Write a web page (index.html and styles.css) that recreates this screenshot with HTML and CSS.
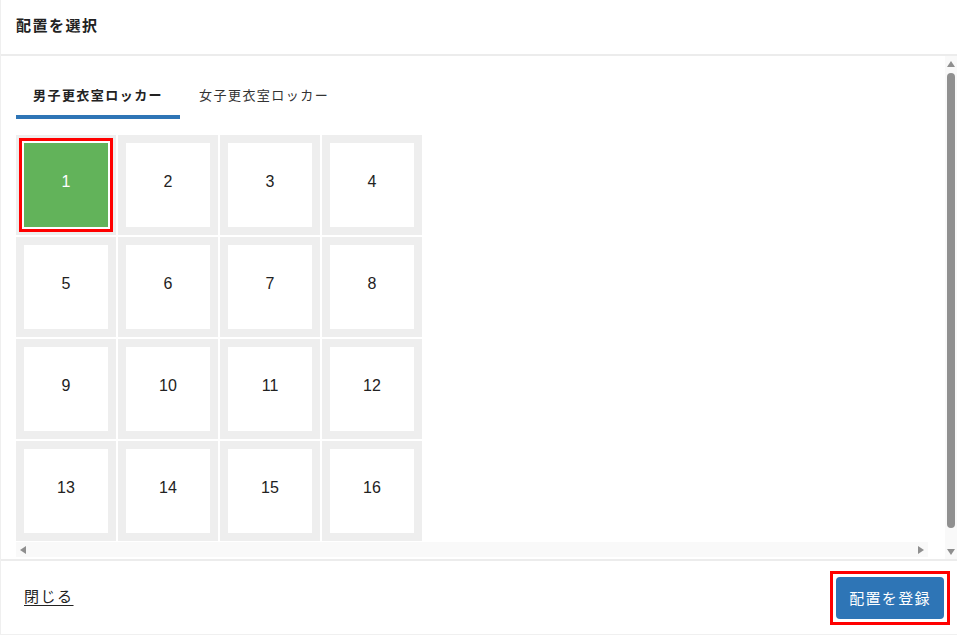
FILE: index.html
```html
<!DOCTYPE html>
<html lang="ja">
<head>
<meta charset="utf-8">
<title>配置を選択</title>
<link rel="stylesheet" href="styles.css">
</head>
<body>
<div class="modal">
  <div class="modal-header">
    <h1 class="modal-title">配置を選択</h1>
  </div>
  <div class="modal-body">
    <div class="body-content">
      <div class="tabs">
        <div class="tab active">男子更衣室ロッカー</div>
        <div class="tab">女子更衣室ロッカー</div>
      </div>
      <div class="locker-grid">
        <div class="cell"><div class="slot selected">1</div></div>
        <div class="cell"><div class="slot">2</div></div>
        <div class="cell"><div class="slot">3</div></div>
        <div class="cell"><div class="slot">4</div></div>
        <div class="cell"><div class="slot">5</div></div>
        <div class="cell"><div class="slot">6</div></div>
        <div class="cell"><div class="slot">7</div></div>
        <div class="cell"><div class="slot">8</div></div>
        <div class="cell"><div class="slot">9</div></div>
        <div class="cell"><div class="slot">10</div></div>
        <div class="cell"><div class="slot">11</div></div>
        <div class="cell"><div class="slot">12</div></div>
        <div class="cell"><div class="slot">13</div></div>
        <div class="cell"><div class="slot">14</div></div>
        <div class="cell"><div class="slot">15</div></div>
        <div class="cell"><div class="slot">16</div></div>
      </div>
      <div class="hscroll">
        <span class="arrow arrow-left"></span>
        <span class="arrow arrow-right"></span>
      </div>
    </div>
    <div class="vscroll">
      <span class="arrow arrow-up"></span>
      <div class="vthumb"></div>
      <span class="arrow arrow-down"></span>
    </div>
  </div>
  <div class="modal-footer">
    <a class="close-link" href="#">閉じる</a>
    <span class="btn-focus"><button class="primary-btn" type="button">配置を登録</button></span>
  </div>
</div>
</body>
</html>
```

FILE: styles.css
```css
* { box-sizing: border-box; }

html, body {
  margin: 0;
  padding: 0;
  background: #ffffff;
}

body {
  font-family: "Liberation Sans", "Noto Sans CJK JP", sans-serif;
  color: #222222;
  width: 957px;
  height: 635px;
  overflow: hidden;
}

.modal {
  height: 635px;
  border-left: 1px solid #efefef;
  border-bottom: 1px solid #f0f0f0;
  display: flex;
  flex-direction: column;
}

.modal-header {
  height: 56px;
  flex: none;
  display: flex;
  align-items: center;
  padding: 0 15px 6px;
  border-bottom: 2px solid #ececec;
}

.modal-title {
  margin: 0;
  font-size: 15px;
  font-weight: bold;
  letter-spacing: 1.5px;
  color: #222222;
  font-family: "Noto Sans CJK JP", sans-serif;
}

.modal-body {
  flex: none;
  height: 503px;
  display: flex;
}

.body-content {
  flex: 1;
  min-width: 0;
  padding: 21px 17px 0 15px;
  display: flex;
  flex-direction: column;
}

.tabs {
  display: flex;
  gap: 2px;
  margin-bottom: 16px;
}

.tab {
  height: 42px;
  line-height: 36px;
  padding: 0 17px 0 17px;
  font-family: "Noto Sans CJK JP", sans-serif;
  font-size: 13px;
  letter-spacing: 1.45px;
  color: #333333;
  border-bottom: 4px solid transparent;
}

.tab.active {
  font-weight: bold;
  color: #222222;
  border-bottom-color: #2e75b6;
}

.locker-grid {
  display: grid;
  grid-template-columns: repeat(4, 100px);
  grid-auto-rows: 100px;
  gap: 2px;
}

.cell {
  background: #eeeeee;
  padding: 8px;
}

.slot {
  width: 84px;
  height: 84px;
  background: #ffffff;
  display: flex;
  align-items: center;
  justify-content: center;
  padding-bottom: 7px;
  font-size: 16px;
  color: #222222;
}

.slot.selected {
  background: #62b35a;
  color: #ffffff;
  box-shadow: 0 0 0 2px #ffffff, 0 0 0 5px #ff0000;
}

.hscroll {
  margin-top: 1px;
  height: 15px;
  background: #f9f9f9;
  display: flex;
  align-items: center;
  justify-content: space-between;
  padding: 0 4px 0 4px;
}

.arrow {
  display: block;
  width: 0;
  height: 0;
}

.arrow-left {
  border-top: 4.5px solid transparent;
  border-bottom: 4.5px solid transparent;
  border-right: 6px solid #8f8f8f;
}

.arrow-right {
  border-top: 4.5px solid transparent;
  border-bottom: 4.5px solid transparent;
  border-left: 6px solid #8f8f8f;
}

.vscroll {
  width: 12px;
  flex: none;
  background: #f9f9f9;
  display: flex;
  flex-direction: column;
  align-items: center;
  padding: 5px 0 4px;
}

.arrow-up {
  border-left: 4.5px solid transparent;
  border-right: 4.5px solid transparent;
  border-bottom: 6px solid #8f8f8f;
}

.arrow-down {
  border-left: 4.5px solid transparent;
  border-right: 4.5px solid transparent;
  border-top: 6px solid #8f8f8f;
}

.vthumb {
  width: 8px;
  flex: 1;
  margin: 6px 0 21px;
  background: #909090;
  border-radius: 4px;
}

.modal-footer {
  flex: 1;
  border-top: 2px solid #ececec;
  display: flex;
  align-items: center;
  justify-content: space-between;
  padding: 0 7px 0 23px;
}

.close-link {
  font-family: "Noto Sans CJK JP", sans-serif;
  font-size: 15px;
  letter-spacing: 1.5px;
  color: #222222;
  text-decoration: underline;
  text-underline-offset: 3px;
  margin-bottom: 5px;
}

.btn-focus {
  display: flex;
  border: 3px solid #ff0000;
  padding: 3px;
  background: #ffffff;
}

.primary-btn {
  width: 108px;
  height: 42px;
  border: none;
  border-radius: 4px;
  background: #2e75b6;
  color: #ffffff;
  font-family: "Noto Sans CJK JP", sans-serif;
  font-size: 15px;
  letter-spacing: 1.3px;
  padding: 0;
}
```
